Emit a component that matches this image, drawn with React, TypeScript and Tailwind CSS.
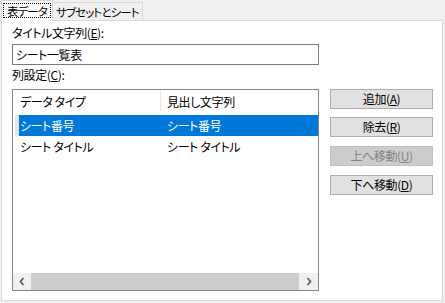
import React from "react";

const font = "font-['Noto_Sans_CJK_JP','Noto_Sans',sans-serif] [font-feature-settings:'palt'] tracking-[-0.4px]";

function Btn({ children, disabled }: { children: React.ReactNode; disabled?: boolean }) {
  return (
    <div
      className={
        "h-[20px] w-[103px] flex items-center justify-center text-[12px] leading-[14px] border whitespace-nowrap " +
        (disabled
          ? "bg-[#cccccc] border-[#bfbfbf] text-[#838383]"
          : "bg-[#e1e1e1] border-[#adadad] text-black")
      }
    >
      {children}
    </div>
  );
}

function U({ children }: { children: React.ReactNode }) {
  return <span className="underline underline-offset-[1px]">{children}</span>;
}

export default function App() {
  return (
    <div className={"w-[445px] h-[303px] bg-[#f0f0f0] text-black text-[12px] leading-[14px] whitespace-nowrap " + font}>
      {/* Tabs */}
      <div className="flex h-[20px] pl-[1px] text-[11.5px] tracking-[-0.9px]">
        <div className="relative z-10 h-[21px] min-w-[52px] bg-white border border-b-0 border-[#d9d9d9] pt-[2px] px-[1px]">
          <div className="h-[15px] min-w-[48px] px-[1px] border border-dotted border-black flex items-center justify-center">
            表データ
          </div>
        </div>
        <div className="mt-[2px] h-[18px] min-w-[87px] px-[3px] border border-l-0 border-b-0 border-[#d9d9d9] bg-[#f0f0f0] flex items-center justify-center">
          サブセットとシート
        </div>
      </div>
      {/* Panel */}
      <div className="ml-[1px] w-[442px] h-[281px] bg-white border border-[#d9d9d9] pl-[10px]">
        <div className="mt-[5px] h-[14px]">
          タイトル文字列(<U>E</U>):
        </div>
        <div className="mt-[4px] h-[21px] w-[307px] border border-[#7a7a7a] flex items-center pl-[3px]">
          シート一覧表
        </div>
        <div className="mt-[3px] h-[14px]">
          列設定(<U>C</U>):
        </div>
        <div className="mt-[7px] flex">
          {/* List view */}
          <div className="w-[307px] h-[202px] border border-[#828790] flex flex-col">
            <div className="flex h-[23px] items-center">
              <div className="w-[147px] pl-[7px]">データ タイプ</div>
              <div className="w-px h-[21px] self-start bg-[#e5e5e5]"></div>
              <div className="pl-[6px]">見出し文字列</div>
            </div>
            <div className="mt-[2px] flex h-[21px]">
              <div className="w-[2px]"></div>
              <div className="w-[4px] bg-[#e6e6e6]"></div>
              <div className="flex-1 flex items-center bg-[#0078d7] text-white">
                <div className="w-[148px] pl-[1px]">シート番号</div>
                <div>シート番号</div>
              </div>
            </div>
            <div className="flex h-[21px] items-center">
              <div className="w-[154px] pl-[7px]">シート タイトル</div>
              <div>シート タイトル</div>
            </div>
            <div className="flex-1"></div>
            {/* Horizontal scrollbar */}
            <div className="h-[17px] flex bg-[#f0f0f0]">
              <div className="w-[18px] flex items-center justify-center">
                <svg width="6" height="9" viewBox="0 0 6 9">
                  <path d="M4.5 1 L1.5 4.5 L4.5 8" stroke="#606060" strokeWidth="1.8" fill="none" />
                </svg>
              </div>
              <div className="flex-1 bg-[#cdcdcd]"></div>
              <div className="w-[19px] flex items-center justify-center">
                <svg width="6" height="9" viewBox="0 0 6 9">
                  <path d="M1.5 1 L4.5 4.5 L1.5 8" stroke="#606060" strokeWidth="1.8" fill="none" />
                </svg>
              </div>
            </div>
          </div>
          {/* Buttons */}
          <div className="ml-[11px] flex flex-col">
            <Btn>
              追加(<U>A</U>)
            </Btn>
            <div className="h-[8px]"></div>
            <Btn>
              除去(<U>R</U>)
            </Btn>
            <div className="h-[9px]"></div>
            <Btn disabled>
              上へ移動(<U>U</U>)
            </Btn>
            <div className="h-[9px]"></div>
            <Btn>
              下へ移動(<U>D</U>)
            </Btn>
          </div>
        </div>
      </div>
    </div>
  );
}
